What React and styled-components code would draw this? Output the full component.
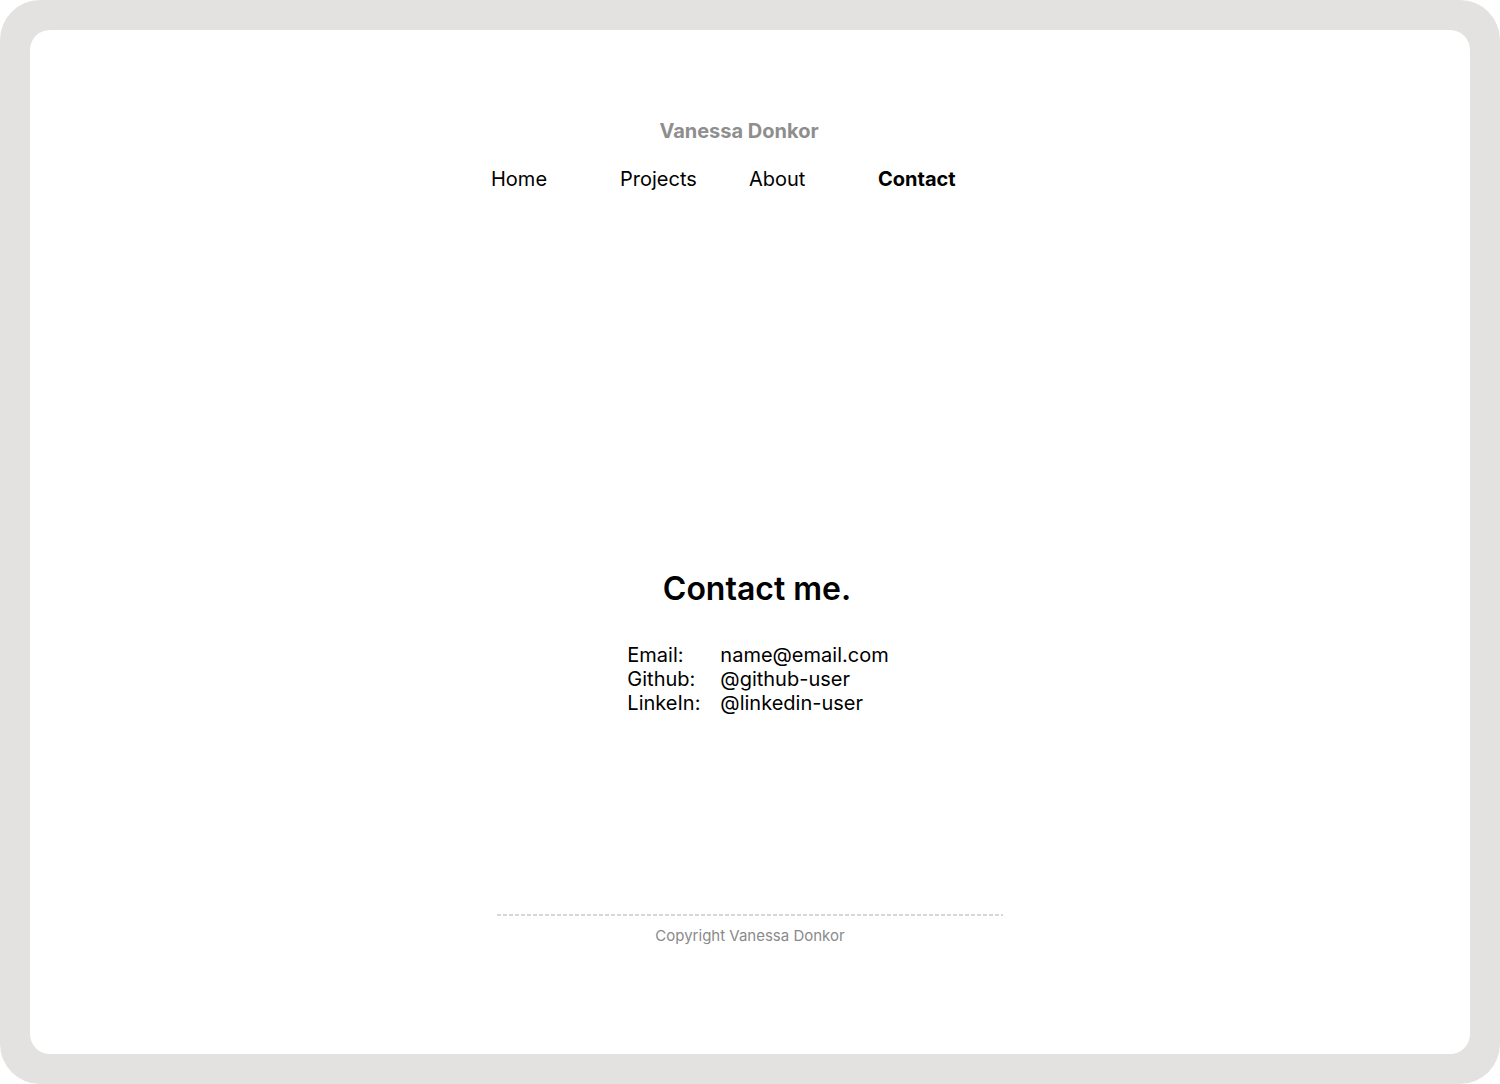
import styled, { createGlobalStyle } from "styled-components";

const GlobalStyle = createGlobalStyle`
  html, body {
    margin: 0;
    padding: 0;
    background: #fff;
    font-family: Inter, "Noto Sans", sans-serif;
    color: #000;
  }
`;

const Frame = styled.div`
  width: 1500px;
  height: 1084px;
  box-sizing: border-box;
  padding: 30px;
  background: #e3e2e0;
  border-radius: 40px;
`;

const Card = styled.div`
  height: 100%;
  background: #fff;
  border-radius: 20px;
  display: flex;
  flex-direction: column;
  align-items: center;
  padding-top: 90px;
  box-sizing: border-box;
`;

const SiteTitle = styled.div`
  font-size: 20px;
  line-height: 22px;
  font-weight: 700;
  color: #8e8e8e;
  margin-right: 22px;
`;

const Nav = styled.nav`
  display: grid;
  grid-template-columns: repeat(4, 129px);
  margin-top: 25px;
  margin-left: -2px;
`;

const NavLink = styled.a`
  font-size: 20px;
  line-height: 24px;
  font-weight: ${(p) => (p.$active ? 700 : 400)};
  color: #000;
  text-decoration: none;
`;

const Main = styled.main`
  display: flex;
  flex-direction: column;
  align-items: center;
  margin-top: 378px;
  margin-left: 14px;
`;

const Heading = styled.h1`
  margin: 0;
  font-size: 32px;
  line-height: 40px;
  font-weight: 600;
`;

const Details = styled.dl`
  display: grid;
  grid-template-columns: 93px auto;
  margin: 34px 0 0 2px;
  font-size: 20px;
  line-height: 24px;
`;

const Label = styled.dt`
  margin: 0;
`;

const Value = styled.dd`
  margin: 0;
`;

const Footer = styled.footer`
  display: flex;
  flex-direction: column;
  align-items: center;
  margin-top: 199px;
`;

const Divider = styled.div`
  width: 506px;
  height: 2px;
  background: repeating-linear-gradient(
    to right,
    #d6d6d6 0 4px,
    transparent 4px 6px
  );
`;

const Copyright = styled.div`
  margin-top: 11px;
  font-size: 15px;
  line-height: 18px;
  color: #8a8a8a;
`;

const links = ["Home", "Projects", "About", "Contact"];

const contacts = [
  ["Email:", "name@email.com"],
  ["Github:", "@github-user"],
  ["LinkeIn:", "@linkedin-user"],
];

export default function App() {
  return (
    <>
      <GlobalStyle />
      <Frame>
        <Card>
          <SiteTitle>Vanessa Donkor</SiteTitle>
          <Nav>
            {links.map((l) => (
              <NavLink key={l} href="#" $active={l === "Contact"}>
                {l}
              </NavLink>
            ))}
          </Nav>
          <Main>
            <Heading>Contact me.</Heading>
            <Details>
              {contacts.map(([k, v]) => [
                <Label key={k}>{k}</Label>,
                <Value key={v}>{v}</Value>,
              ])}
            </Details>
          </Main>
          <Footer>
            <Divider />
            <Copyright>Copyright Vanessa Donkor</Copyright>
          </Footer>
        </Card>
      </Frame>
    </>
  );
}
